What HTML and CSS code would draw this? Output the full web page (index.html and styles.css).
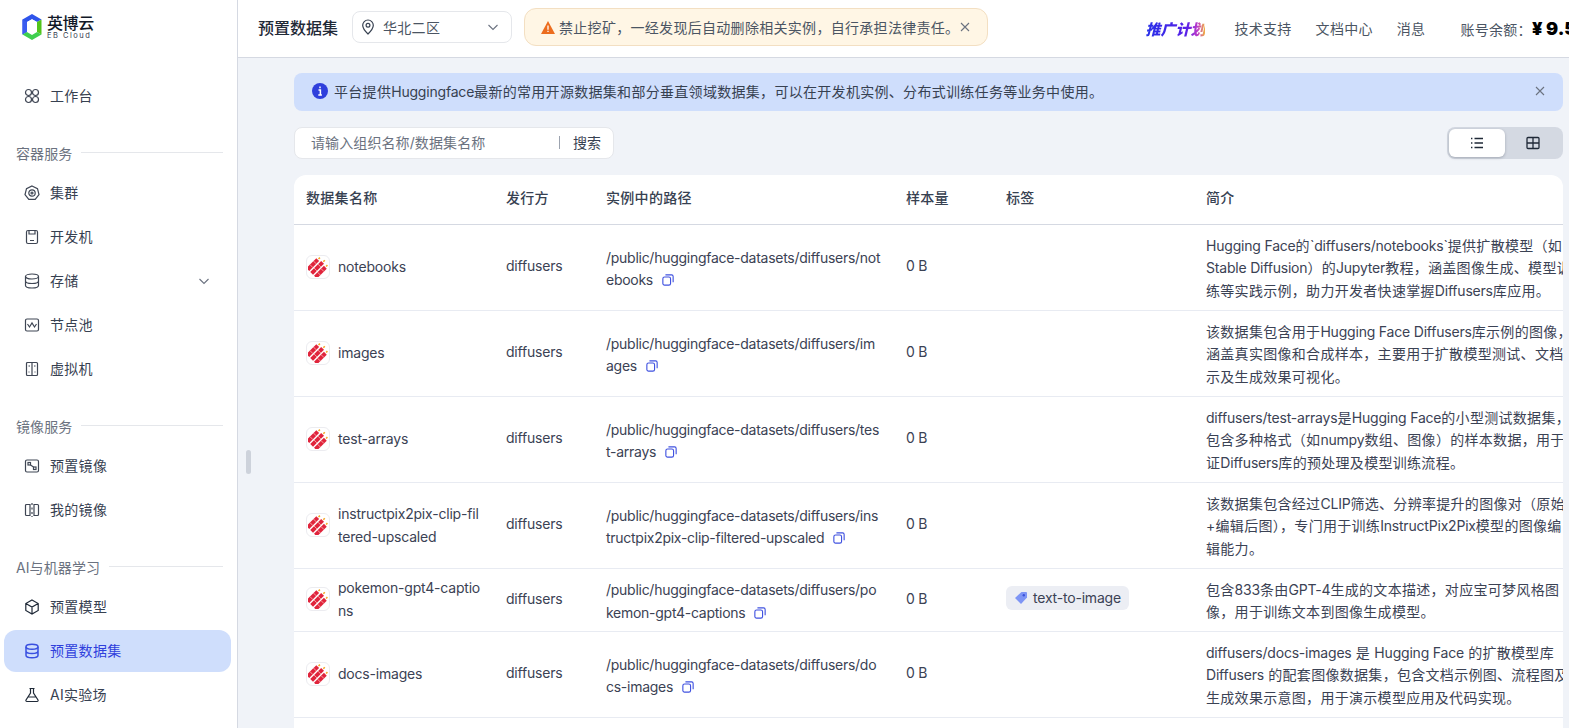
FILE: index.html
```html
<!DOCTYPE html>
<html lang="zh-CN">
<head>
<meta charset="utf-8">
<title>预置数据集</title>
<link rel="stylesheet" href="styles.css">
</head>
<body>
<svg class="defs" width="0" height="0" aria-hidden="true">
  <symbol id="cracker" viewBox="2 2 20 20">
    <g transform="rotate(45 12 12)">
      <rect x="4.600" y="7" width="4" height="14" fill="#e0243c"/>
      <rect x="10" y="5.500" width="4" height="15.500" fill="#e0243c"/>
      <rect x="15.400" y="7" width="4" height="14" fill="#e0243c"/>
      <path d="M4.600 11h4M4.600 16h4M10 10h4M10 15.500h4M15.400 11h4M15.400 16h4" stroke="#f9c9c0" stroke-width=".7"/>
      <rect x="11.300" y="2.500" width="1.500" height="2" fill="#f5a623"/>
      <rect x="6" y="4" width="1.500" height="2" fill="#f5a623"/>
      <rect x="16.600" y="4" width="1.500" height="2" fill="#f5a623"/>
    </g>
  </symbol>
  <symbol id="copy" viewBox="0 0 14 14">
    <rect x="1" y="3.500" width="9" height="9.500" rx="2" fill="none" stroke="#3f51e0" stroke-width="1.300"/>
    <path d="M4 1h7.200A1.800 1.800 0 0 1 13 2.800v6.700" fill="none" stroke="#3f51e0" stroke-width="1.300"/>
  </symbol>
  <symbol id="x" viewBox="0 0 12 12">
    <path d="M2 2l8 8M10 2l-8 8" fill="none" stroke="#6b7280" stroke-width="1.100"/>
  </symbol>
  <symbol id="chev" viewBox="0 0 12 12">
    <path d="M1.500 4l4.500 4.500L10.500 4" fill="none" stroke="#6b7280" stroke-width="1.100"/>
  </symbol>
</svg>
<div class="app">
  <aside class="sidebar">
    <div class="logo">
      <svg class="logo-mark" viewBox="0 0 20 26" width="20" height="26">
        <path d="M10 0l9.500 5.500-4.500 2.600-5-2.900-5 2.900V18l-4.500 2.500V5.500z" fill="#2f54eb"/>
        <path d="M15 8.100l4.500-2.600v15l-4.500-2.500z" fill="#52c41a"/>
        <path d="M.5 5.500L5 8.100V18L.5 20.500z" fill="#3b5cf0"/>
        <path d="M5 18l5 2.900 5-2.900 4.500 2.500L10 26 .5 20.500z" fill="#3fcf4e"/>
        <path d="M5 8.100l5-2.900 5 2.900-5 2.900z" fill="#fff"/>
      </svg>
      <div class="logo-text"><span class="logo-cn">英博云</span><span class="logo-en">EB Cloud</span></div>
    </div>
    <nav class="nav">
      <a class="item"><svg class="ic" viewBox="0 0 16 16"><circle cx="4.500" cy="4.500" r="3"/><circle cx="11.500" cy="4.500" r="3"/><circle cx="4.500" cy="11.500" r="3"/><circle cx="11.500" cy="11.500" r="3"/></svg>工作台</a>

      <div class="label">容器服务</div>
      <a class="item"><svg class="ic" viewBox="0 0 16 16"><path d="M8 1l5.500 2.700L15 9.500l-3.800 4.800H4.800L1 9.500l1.500-5.800z"/><circle cx="8" cy="8" r="3.200"/><circle cx="8" cy="8" r="1"/></svg>集群</a>
      <a class="item"><svg class="ic" viewBox="0 0 16 16"><rect x="2.500" y="1.500" width="11" height="13" rx="1.500"/><path d="M5 1.500v3.500h6V1.500M6 11.500h4"/></svg>开发机</a>
      <a class="item"><svg class="ic" viewBox="0 0 16 16"><ellipse cx="8" cy="3.500" rx="6.500" ry="2.500"/><path d="M1.500 3.500v9c0 1.400 2.900 2.500 6.500 2.500s6.500-1.100 6.500-2.500v-9M1.500 8c0 1.400 2.900 2.500 6.500 2.500s6.500-1.100 6.500-2.500"/></svg><span class="grow">存储</span><svg class="chev-svg"><use href="#chev"/></svg></a>
      <a class="item"><svg class="ic" viewBox="0 0 16 16"><rect x="1.500" y="2" width="13" height="12" rx="1.500"/><path d="M3.500 7l2 3 2.500-4 2.500 4 2-3"/></svg>节点池</a>
      <a class="item"><svg class="ic" viewBox="0 0 16 16"><rect x="2.500" y="1.500" width="11" height="13" rx="1"/><path d="M8 1.500v13M4.500 5h1.500M10 5h1.500M4.500 11h1M10.500 11h1"/></svg>虚拟机</a>

      <div class="label">镜像服务</div>
      <a class="item"><svg class="ic" viewBox="0 0 16 16"><rect x="1.500" y="2" width="13" height="12" rx="1.500"/><rect x="4" y="4.500" width="2.500" height="2.500"/><rect x="9.500" y="9" width="2.500" height="2.500"/><path d="M6.500 7l3 2"/></svg>预置镜像</a>
      <a class="item"><svg class="ic" viewBox="0 0 16 16"><path d="M6 2.500H2.500a1 1 0 0 0-1 1v9a1 1 0 0 0 1 1H6zM10 2.500h3.500a1 1 0 0 1 1 1v9a1 1 0 0 1-1 1H10z"/><path d="M8 1v2M8 5.500v2M8 10v2M8 14v1"/></svg>我的镜像</a>

      <div class="label">AI与机器学习</div>
      <a class="item"><svg class="ic ic-dark" viewBox="0 0 16 16"><path d="M8 1l6.200 3.500v7L8 15l-6.200-3.500v-7zM1.800 4.500L8 8l6.200-3.500M8 8v7"/></svg>预置模型</a>
      <a class="item item-active"><svg class="ic ic-active" viewBox="0 0 16 16"><ellipse cx="8" cy="3.800" rx="6" ry="2.500"/><path d="M2 3.800v8.400c0 1.400 2.700 2.500 6 2.500s6-1.100 6-2.500V3.800M2 8c0 1.400 2.700 2.500 6 2.500s6-1.100 6-2.500"/></svg>预置数据集</a>
      <a class="item"><svg class="ic ic-dark" viewBox="0 0 16 16"><path d="M5.500 1.500h5M6.500 1.500v4.500L2 13a1 1 0 0 0 .9 1.500h10.200A1 1 0 0 0 14 13L9.500 6V1.500M4.200 10h7.600"/></svg>AI实验场</a>
    </nav>
  </aside>

  <div class="handle"></div>

  <div class="right">
    <header class="topbar">
      <h1 class="title">预置数据集</h1>
      <div class="region">
        <svg class="region-pin" viewBox="0 0 14 16" width="14" height="16"><path d="M7 1a5.300 5.300 0 0 0-5.300 5.300C1.700 10 7 15 7 15s5.300-5 5.300-8.700A5.300 5.300 0 0 0 7 1z"/><circle cx="7" cy="6.300" r="1.900"/></svg>
        <span class="grow">华北二区</span>
        <svg class="chev-svg"><use href="#chev"/></svg>
      </div>
      <div class="warn">
        <svg class="warn-ic" viewBox="0 0 14 13" width="14" height="13"><path d="M7 0l7 13H0z" fill="#ec6d1e"/><path d="M7 4.500v4.300M7 9.800v1.300" stroke="#fff" stroke-width="1.300"/></svg>
        <span>禁止挖矿，一经发现后自动删除相关实例，自行承担法律责任。</span>
        <svg class="close"><use href="#x"/></svg>
      </div>
      <div class="top-right">
        <span class="promo">推广计划</span>
        <a class="top-link">技术支持</a>
        <a class="top-link">文档中心</a>
        <a class="top-link">消息</a>
        <span class="balance">账号余额：<b class="money">¥ 9.50</b></span>
      </div>
    </header>

    <main class="content">
      <div class="banner">
        <svg class="info" viewBox="0 0 16 16" width="16" height="16"><circle cx="8" cy="8" r="8" fill="#2f3fdc"/><path d="M8 3.400v1.800M6.500 7h1.900v4.800M6.300 12h3.600" stroke="#fff" stroke-width="1.500" fill="none"/></svg>
        <span class="grow">平台提供<span class="lat">Huggingface</span>最新的常用开源数据集和部分垂直领域数据集，可以在开发机实例、分布式训练任务等业务中使用。</span>
        <svg class="close"><use href="#x"/></svg>
      </div>

      <div class="tools">
        <div class="search">
          <span class="placeholder">请输入组织名称/数据集名称</span>
          <span class="sep"></span>
          <span class="search-btn">搜索</span>
        </div>
        <div class="toggle">
          <span class="tg tg-on"><svg viewBox="0 0 14 14" width="14" height="14"><path d="M1 2.500h1.400M1 7h1.400M1 11.500h1.400M4.500 2.500H13M4.500 7H13M4.500 11.500H13" stroke="#1f2937" stroke-width="1.400" fill="none"/></svg></span>
          <span class="tg"><svg viewBox="0 0 14 14" width="14" height="14"><rect x="1" y="1.500" width="12" height="11" rx="1" stroke="#1f2937" stroke-width="1.300" fill="none"/><path d="M7 1.500v11M1 7h12" stroke="#1f2937" stroke-width="1.300"/></svg></span>
        </div>
      </div>

      <div class="card">
        <table class="table">
          <colgroup><col class="c1"><col class="c2"><col class="c3"><col class="c4"><col class="c5"><col class="c6"></colgroup>
          <thead>
            <tr><th>数据集名称</th><th>发行方</th><th>实例中的路径</th><th>样本量</th><th>标签</th><th>简介</th></tr>
          </thead>
          <tbody>
            <tr class="row-3">
              <td class="lat"><div class="name"><span class="ds-ic"><svg width="20" height="20"><use href="#cracker"/></svg></span><span class="name-t">notebooks</span></div></td>
              <td class="lat">diffusers</td>
              <td class="path">/public/huggingface-datasets/diffusers/notebooks<svg class="copy"><use href="#copy"/></svg></td>
              <td class="lat">0 B</td><td></td>
              <td class="desc"><span class="lat">Hugging Face</span>的<span class="lat">`diffusers/notebooks`</span>提供扩散模型（如<br><span class="lat">Stable Diffusion</span>）的<span class="lat">Jupyter</span>教程，涵盖图像生成、模型训<br>练等实践示例，助力开发者快速掌握<span class="lat">Diffusers</span>库应用。</td>
            </tr>
            <tr class="row-3">
              <td class="lat"><div class="name"><span class="ds-ic"><svg width="20" height="20"><use href="#cracker"/></svg></span><span class="name-t">images</span></div></td>
              <td class="lat">diffusers</td>
              <td class="path">/public/huggingface-datasets/diffusers/images<svg class="copy"><use href="#copy"/></svg></td>
              <td class="lat">0 B</td><td></td>
              <td class="desc">该数据集包含用于<span class="lat">Hugging Face Diffusers</span>库示例的图像，<br>涵盖真实图像和合成样本，主要用于扩散模型测试、文档展<br>示及生成效果可视化。</td>
            </tr>
            <tr class="row-3">
              <td class="lat"><div class="name"><span class="ds-ic"><svg width="20" height="20"><use href="#cracker"/></svg></span><span class="name-t">test-arrays</span></div></td>
              <td class="lat">diffusers</td>
              <td class="path">/public/huggingface-datasets/diffusers/test-arrays<svg class="copy"><use href="#copy"/></svg></td>
              <td class="lat">0 B</td><td></td>
              <td class="desc"><span class="lat">diffusers/test-arrays</span>是<span class="lat">Hugging Face</span>的小型测试数据集，<br>包含多种格式（如<span class="lat">numpy</span>数组、图像）的样本数据，用于验<br>证<span class="lat">Diffusers</span>库的预处理及模型训练流程。</td>
            </tr>
            <tr class="row-3">
              <td class="lat"><div class="name"><span class="ds-ic"><svg width="20" height="20"><use href="#cracker"/></svg></span><span class="name-t">instructpix2pix-clip-filtered-upscaled</span></div></td>
              <td class="lat">diffusers</td>
              <td class="path">/public/huggingface-datasets/diffusers/instructpix2pix-clip-filtered-upscaled<svg class="copy"><use href="#copy"/></svg></td>
              <td class="lat">0 B</td><td></td>
              <td class="desc">该数据集包含经过<span class="lat">CLIP</span>筛选、分辨率提升的图像对（原始图<br>+编辑后图），专门用于训练<span class="lat">InstructPix2Pix</span>模型的图像编<br>辑能力。</td>
            </tr>
            <tr class="row-2">
              <td class="lat"><div class="name"><span class="ds-ic"><svg width="20" height="20"><use href="#cracker"/></svg></span><span class="name-t">pokemon-gpt4-captions</span></div></td>
              <td class="lat">diffusers</td>
              <td class="path">/public/huggingface-datasets/diffusers/pokemon-gpt4-captions<svg class="copy"><use href="#copy"/></svg></td>
              <td class="lat">0 B</td>
              <td class="lat"><span class="tag"><svg viewBox="0 0 14 14" width="14" height="14"><path d="M7.500 1H12a1 1 0 0 1 1 1v4.500L7 13 1 7z" fill="#7e95f5"/><circle cx="9.800" cy="4.200" r="1.200" fill="#3c52d8"/></svg>text-to-image</span></td>
              <td class="desc">包含<span class="lat">833</span>条由<span class="lat">GPT-4</span>生成的文本描述，对应宝可梦风格图<br>像，用于训练文本到图像生成模型。</td>
            </tr>
            <tr class="row-3">
              <td class="lat"><div class="name"><span class="ds-ic"><svg width="20" height="20"><use href="#cracker"/></svg></span><span class="name-t">docs-images</span></div></td>
              <td class="lat">diffusers</td>
              <td class="path">/public/huggingface-datasets/diffusers/docs-images<svg class="copy"><use href="#copy"/></svg></td>
              <td class="lat">0 B</td><td></td>
              <td class="desc"><span class="lat">diffusers/docs-images</span> 是 <span class="lat">Hugging Face</span> 的扩散模型库<br><span class="lat">Diffusers</span> 的配套图像数据集，包含文档示例图、流程图及<br>生成效果示意图，用于演示模型应用及代码实现。</td>
            </tr>
            <tr class="row-3"><td></td><td></td><td></td><td></td><td></td><td></td></tr>
          </tbody>
        </table>
      </div>
    </main>
  </div>
</div>
</body>
</html>
```

FILE: styles.css
```css
* { box-sizing: border-box; }
html, body { margin: 0; height: 100%; overflow: hidden; }
body {
  font-family: Inter, "Noto Sans CJK SC", sans-serif;
  font-size: 14px;
  color: #374151;
  background: #f0f3f8;
  letter-spacing: 0.3px;
}
.lat { letter-spacing: -0.2px; }
.defs { position: absolute; }
.grow { flex: 1 1 auto; min-width: 0; }

.app { display: flex; height: 728px; overflow: hidden; position: relative; }

/* Sidebar */
.sidebar {
  flex: 0 0 238px;
  background: #fff;
  border-right: 1px solid #d5d9e2;
  padding: 0 6px 0 4px;
  overflow: hidden;
}
.logo { display: flex; align-items: flex-start; gap: 5px; padding: 14px 0 0 18px; height: 75px; }
.logo-mark { flex: none; }
.logo-text { display: flex; flex-direction: column; color: #111827; }
.logo-cn { font-size: 16px; line-height: 18px; font-weight: 500; letter-spacing: -0.400px; }
.logo-en { font-size: 7.500px; line-height: 7px; letter-spacing: 1.500px; color: #374151; white-space: nowrap; }

.nav { display: flex; flex-direction: column; }
.item {
  display: flex; align-items: center; gap: 10px;
  height: 42px; margin-bottom: 2px;
  padding: 0 21px 0 20px;
  border-radius: 12px;
  color: #374151;
  line-height: 20px;
}
.item-active { background: #cfdefc; color: #2f3fdc; }
.ic { width: 16px; height: 16px; flex: none; fill: none; stroke: #3f4654; stroke-width: 1.200; }
.ic-dark { stroke: #1f2937; }
.ic-active { stroke: #3a50e0; stroke-width: 1.500; }
.chev-svg { width: 12px; height: 12px; flex: none; }

.label {
  display: flex; align-items: center; gap: 9px;
  height: 20px; margin: 24px 8px 9px 12px;
  color: #6b7280; white-space: nowrap;
  letter-spacing: 0.100px;
}
.label::after { content: ""; flex: 1; height: 1px; background: #e5e7eb; margin-top: -1px; }

.handle {
  position: absolute; left: 246px; top: 450px;
  width: 5px; height: 24px; border-radius: 3px; background: #cdd2db;
}

/* Right part */
.right { flex: 1 1 auto; min-width: 0; display: flex; flex-direction: column; overflow: hidden; }
.topbar {
  flex: 0 0 58px;
  display: flex; align-items: center;
  background: #fff; border-bottom: 1px solid #d5d9e2;
  padding: 0 0 3px 20px;
  white-space: nowrap;
  overflow: hidden;
}
.title { margin: 0; font-size: 16px; font-weight: 500; color: #1f2937; flex: 0 0 94px; letter-spacing: 0; }
.region {
  flex: 0 0 160px; height: 32px;
  display: flex; align-items: center; gap: 8px;
  padding: 0 12px 0 8px;
  border: 1px solid #e5e7eb; border-radius: 8px; color: #4b5563;
  margin-right: 12px;
}
.region-pin { fill: none; stroke: #374151; stroke-width: 1.200; flex: none; }
.warn {
  flex: 0 0 464px; height: 38px;
  display: flex; align-items: center;
  padding: 0 16px;
  background: #fff6e5; border: 1px solid #f3dfc2; border-radius: 12px;
  color: #4b5563;
}
.warn-ic { flex: none; margin-right: 4px; }
.close { width: 12px; height: 12px; flex: none; }
.top-right { flex: none; display: flex; align-items: center; margin: 2px 0 0 157px; }
.promo {
  font-size: 15px; font-weight: 900; font-style: italic; width: 60px; letter-spacing: 0;
  background: linear-gradient(90deg, #2430e8, #5a20e8 70%, #c03cc8 88%, #f2b13c);
  -webkit-background-clip: text; background-clip: text; color: transparent;
  margin-right: 29px;
}
.top-link { color: #4b5563; margin-right: 24px; }
.balance { margin-left: 11px; color: #4b5563; }
.money { font-size: 18px; font-weight: 900; color: #000; letter-spacing: 0; }

/* Content */
.content { flex: 1 1 auto; min-height: 0; padding: 15px 6px 0 56px; overflow: hidden; }
.banner {
  height: 38px; display: flex; align-items: center; gap: 6px;
  padding: 0 17px 2px 18px;
  background: #cfdefc; border-radius: 8px; color: #374151;
}
.info { flex: none; }
.tools { display: flex; justify-content: space-between; align-items: center; margin: 16px 0; }
.search {
  width: 320px; height: 32px; display: flex; align-items: center;
  padding: 0 12px 2px 16px;
  background: #fff; border: 1px solid #e5e7eb; border-radius: 8px;
}
.placeholder { flex: 1; color: #6b7280; letter-spacing: 0.100px; }
.sep { width: 1px; height: 13px; background: #9ca3af; margin-right: 13px; }
.search-btn { color: #374151; letter-spacing: 0; }
.toggle {
  width: 116px; height: 32px; display: flex; padding: 2px;
  background: #d4d9e2; border-radius: 8px;
}
.tg { flex: 1; display: flex; align-items: center; justify-content: center; border-radius: 6px; }
.tg-on { background: #fff; box-shadow: 0 1px 3px rgba(15, 23, 42, .25); }

/* Table */
.card { background: #fff; border-radius: 12px 12px 0 0; overflow: hidden; }
.table { table-layout: fixed; width: 1400px; border-collapse: separate; border-spacing: 0; line-height: 22.400px; }
.c1 { width: 200px; } .c2 { width: 100px; } .c3 { width: 300px; }
.c4 { width: 100px; } .c5 { width: 200px; } .c6 { width: 500px; }
th {
  height: 50px; padding: 0 12px 2px; text-align: left; font-weight: 500; color: #374151;
  border-bottom: 1px solid #d5d9e2;
}
td { padding: 0 12px 2px; border-bottom: 1px solid #e8ebf2; color: #3b4254; vertical-align: middle; }
.row-3 td { height: 86px; }
.row-2 td { height: 63px; }
.name { display: flex; align-items: center; gap: 8px; }
.ds-ic {
  flex: none; width: 24px; height: 24px; display: flex; align-items: center; justify-content: center;
  border: 1px solid #ececf0; border-radius: 6px; background: #fff;
}
.name-t { word-break: break-all; min-width: 0; line-height: 23px; }
td.path { word-break: break-all; padding: 3px 12px 0; letter-spacing: -0.270px; }
.copy { width: 12px; height: 12px; margin-left: 9px; vertical-align: -1px; }
td.desc { white-space: nowrap; padding: 2px 12px 0; }
.tag {
  display: inline-flex; align-items: center; gap: 5px;
  height: 24px; padding: 0 8px; border-radius: 6px; background: #eceef4; color: #3b4254;
}
```
